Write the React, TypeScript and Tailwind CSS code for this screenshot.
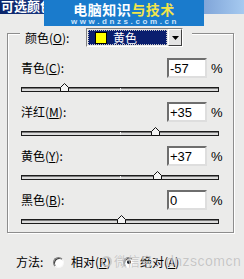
import React from "react";

const cjk = { fontFamily: '"Noto Sans CJK SC", "Liberation Sans", sans-serif' };
const latin = { fontFamily: '"Liberation Sans", Arial, sans-serif' };

const rows = [
  { name: "青色", key: "C", value: "-57", n: -57 },
  { name: "洋红", key: "M", value: "+35", n: 35 },
  { name: "黄色", key: "Y", value: "+37", n: 37 },
  { name: "黑色", key: "B", value: "0", n: 0 },
];

function Thumb() {
  return (
    <svg width="9" height="9" viewBox="0 0 9 9">
      <path d="M0.5 8.5 L0.5 4.5 L4.5 0.5 L8.5 4.5 L8.5 8.5 Z" fill="#f4f4f4" stroke="#111" strokeWidth="1" />
    </svg>
  );
}

function Slider({ n }: { n: number }) {
  const left = ((n + 100) / 200) * 198 - 4.5;
  return (
    <div className="h-[24px] pt-[9px]">
      <div className="relative w-[198px] h-[5px] border border-[#1c1c1c] bg-[#dcdcdc] shadow-[inset_0_1px_0_#7a7a7a]">
        <div className="absolute left-[98px] top-0 w-px h-full bg-[#f2f2f2]" />
        <div className="absolute top-[-5px]" style={{ left }}>
          <Thumb />
        </div>
      </div>
    </div>
  );
}

function Radio({ checked }: { checked?: boolean }) {
  return (
    <span className="w-[11px] h-[11px] rounded-full bg-white border border-t-[#7c7c7c] border-l-[#7c7c7c] border-b-[#f8f8f8] border-r-[#f8f8f8] shadow-[inset_1px_1px_0_#404040] flex items-center justify-center">
      {checked && <span className="w-[4px] h-[4px] rounded-full bg-black" />}
    </span>
  );
}

export default function App() {
  return (
    <div className="relative w-[244px] h-[279px] overflow-hidden bg-[#ebebea] text-black" style={cjk}>
      {/* title bar */}
      <div className="h-[14px] bg-gradient-to-r from-[#0a246a] via-[#3a5ca8] to-[#a6caf0] overflow-hidden">
        <div className="text-[13px] leading-[13px] font-bold text-white mt-[-1px] pl-[1px]">可选颜色</div>
      </div>

      {/* site watermark */}
      <div className="absolute left-[44px] top-0 w-[160px] h-[26px] bg-[#1a7bcc] flex flex-col items-center">
        <div className="text-[14px] leading-[14px] font-bold mt-[2px] tracking-[0.5px]">
          <span className="text-white">电脑知识</span>
          <span className="text-[#f3e54a]">与技术</span>
        </div>
        <div className="text-[8px] leading-[8px] font-bold text-[#cde4fb] tracking-[2.6px] mt-[2px] pl-[2px]" style={latin}>
          www.dnzs.com.cn
        </div>
      </div>

      {/* group box */}
      <div className="relative ml-[7px] mt-[19px] w-[227px] h-[200px] border border-[#8d8d8d] shadow-[inset_1px_1px_0_#fff,1px_1px_0_#fff] pt-[24px] pl-[13px]">
        <div className="absolute left-[12px] top-[-6px] w-[172px] h-[19px] bg-[#ebebea] flex items-center pl-[5px]">
          <span className="text-[12px] leading-[12px] w-[61px]">
            颜色(<u>O</u>):
          </span>
          <div className="flex h-[19px] w-[97px] border border-t-[#808080] border-l-[#808080] border-b-white border-r-white">
            <div className="flex-1 bg-[#0a1e6e] m-[1px] border border-dotted border-[#c8c8c8] flex items-center pl-[6px]">
              <span className="w-[12px] h-[12px] bg-[#ffff00] border border-black" />
              <span className="text-white text-[12px] leading-[12px] ml-[6px]">黄色</span>
            </div>
            <div className="w-[14px] bg-[#e4e4e4] border border-t-white border-l-white border-b-[#404040] border-r-[#404040] flex items-center justify-center">
              <svg width="7" height="4" viewBox="0 0 7 4">
                <path d="M0 0 H7 L3.5 4 Z" fill="#000" />
              </svg>
            </div>
          </div>
        </div>

        {rows.map((r) => (
          <div key={r.key}>
            <div className="flex items-center h-[20px]">
              <span className="w-[146px] text-[12px] leading-[12px]">
                {r.name}(<u>{r.key}</u>):
              </span>
              <div className="w-[40px] h-[20px] bg-white border-2 border-t-[#6e6e6e] border-l-[#6e6e6e] border-b-[#dedede] border-r-[#dedede] flex items-center pl-[1px] text-[13px] leading-[13px]" style={latin}>
                {r.value}
              </div>
              <span className="ml-[4px] text-[13px] leading-[13px]" style={latin}>%</span>
            </div>
            <Slider n={r.n} />
          </div>
        ))}
      </div>

      {/* method */}
      <div className="flex items-center h-[14px] mt-[22px] pl-[16px] text-[12px] leading-[12px]">
        <span className="w-[37px]">方法:</span>
        <Radio />
        <span className="ml-[7px] w-[52px]">
          相对(<u>R</u>)
        </span>
        <Radio checked />
        <span className="ml-[6px]">
          绝对(<u>A</u>)
        </span>
      </div>

      {/* wechat watermark */}
      <div className="absolute left-[101px] top-[254px] flex items-center opacity-80 text-[#bdbdbd] [text-shadow:0_0_1px_#fff]">
        <span className="w-[11px] h-[11px] rounded-full border-2 border-[#c4c4c4]" />
        <span className="ml-[2px] text-[13px] leading-[14px]">微信号：</span>
        <span className="text-[14px] leading-[14px] tracking-[0.5px]" style={latin}>dnzscomcn</span>
      </div>
    </div>
  );
}
